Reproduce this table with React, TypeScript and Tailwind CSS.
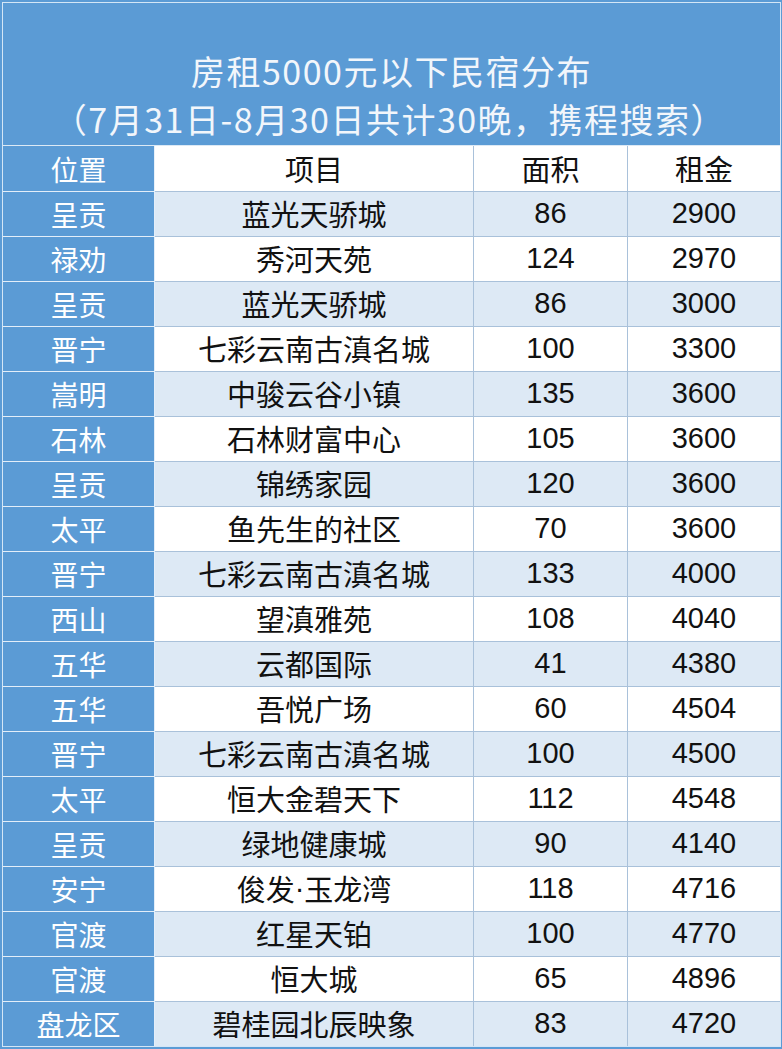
const rows: [string, string, string, string][] = [
  ['呈贡', '蓝光天骄城', '86', '2900'],
  ['禄劝', '秀河天苑', '124', '2970'],
  ['呈贡', '蓝光天骄城', '86', '3000'],
  ['晋宁', '七彩云南古滇名城', '100', '3300'],
  ['嵩明', '中骏云谷小镇', '135', '3600'],
  ['石林', '石林财富中心', '105', '3600'],
  ['呈贡', '锦绣家园', '120', '3600'],
  ['太平', '鱼先生的社区', '70', '3600'],
  ['晋宁', '七彩云南古滇名城', '133', '4000'],
  ['西山', '望滇雅苑', '108', '4040'],
  ['五华', '云都国际', '41', '4380'],
  ['五华', '吾悦广场', '60', '4504'],
  ['晋宁', '七彩云南古滇名城', '100', '4500'],
  ['太平', '恒大金碧天下', '112', '4548'],
  ['呈贡', '绿地健康城', '90', '4140'],
  ['安宁', '俊发·玉龙湾', '118', '4716'],
  ['官渡', '红星天铂', '100', '4770'],
  ['官渡', '恒大城', '65', '4896'],
  ['盘龙区', '碧桂园北辰映象', '83', '4720'],
]

const cjk = "font-['Noto_Sans_CJK_SC',sans-serif]"
const num = "font-['Liberation_Sans','Noto_Sans_CJK_SC',sans-serif]"

// 半角间隔号，避免 CJK 字体里的全角点
function Project({ name }: { name: string }) {
  const parts = name.split('·')
  if (parts.length === 1) return <>{name}</>
  return (
    <>
      {parts[0]}
      <span className="font-['Liberation_Sans',sans-serif]">·</span>
      {parts[1]}
    </>
  )
}

export default function App() {
  return (
    <div className="w-[782px] h-[1049px] bg-[#5b9bd5] pt-[2px] pl-[2px] pr-[1px] pb-[2px]">
      <div className="h-full border border-[#d4e6f6] flex flex-col">
        {/* 标题 */}
        <div className={`h-[142px] pt-[44px] text-center text-[34px] leading-[48px] tracking-[1.5px] text-[#f2f6fb] ${cjk}`}>
          <p>房租5000元以下民宿分布</p>
          <p className="-ml-[4px]">（7月31日-8月30日共计30晚，携程搜索）</p>
        </div>

        {/* 表格 */}
        <div className="grid grid-cols-[152px_319px_154px_1fr] border-t border-[#dce9f5]">
          <Head first>位置</Head>
          <Head>项目</Head>
          <Head>面积</Head>
          <Head last>租金</Head>
          {rows.map((r, i) => {
            const bg = i % 2 === 0 ? 'bg-[#dde9f5]' : 'bg-white'
            return <Row key={i} bg={bg} cells={r} />
          })}
        </div>
      </div>
    </div>
  )
}

function Head({ children, first, last }: { children: React.ReactNode; first?: boolean; last?: boolean }) {
  if (first) {
    return (
      <div className={`h-[45px] flex items-center justify-center bg-[#5b9bd5] text-white text-[28px] border-r border-[#e8f1fa] ${cjk}`}>
        {children}
      </div>
    )
  }
  return (
    <div className={`h-[45px] flex items-center justify-center bg-white text-[#111] text-[29px] ${last ? '' : 'border-r border-[#a9c1da]'} ${cjk}`}>
      {children}
    </div>
  )
}

function Row({ bg, cells }: { bg: string; cells: [string, string, string, string] }) {
  return (
    <>
      <div className={`h-[45px] flex items-center justify-center bg-[#5b9bd5] text-white text-[28px] border-t border-r border-[#e3eef9] ${cjk}`}>
        {cells[0]}
      </div>
      <div className={`h-[45px] flex items-center justify-center ${bg} text-[#111] text-[29px] border-t border-r border-[#a9c1da] ${cjk}`}>
        <Project name={cells[1]} />
      </div>
      <div className={`h-[45px] flex items-center justify-center ${bg} text-[#111] text-[29px] border-t border-r border-[#a9c1da] ${num}`}>
        {cells[2]}
      </div>
      <div className={`h-[45px] flex items-center justify-center ${bg} text-[#111] text-[29px] border-t border-[#a9c1da] ${num}`}>
        {cells[3]}
      </div>
    </>
  )
}
